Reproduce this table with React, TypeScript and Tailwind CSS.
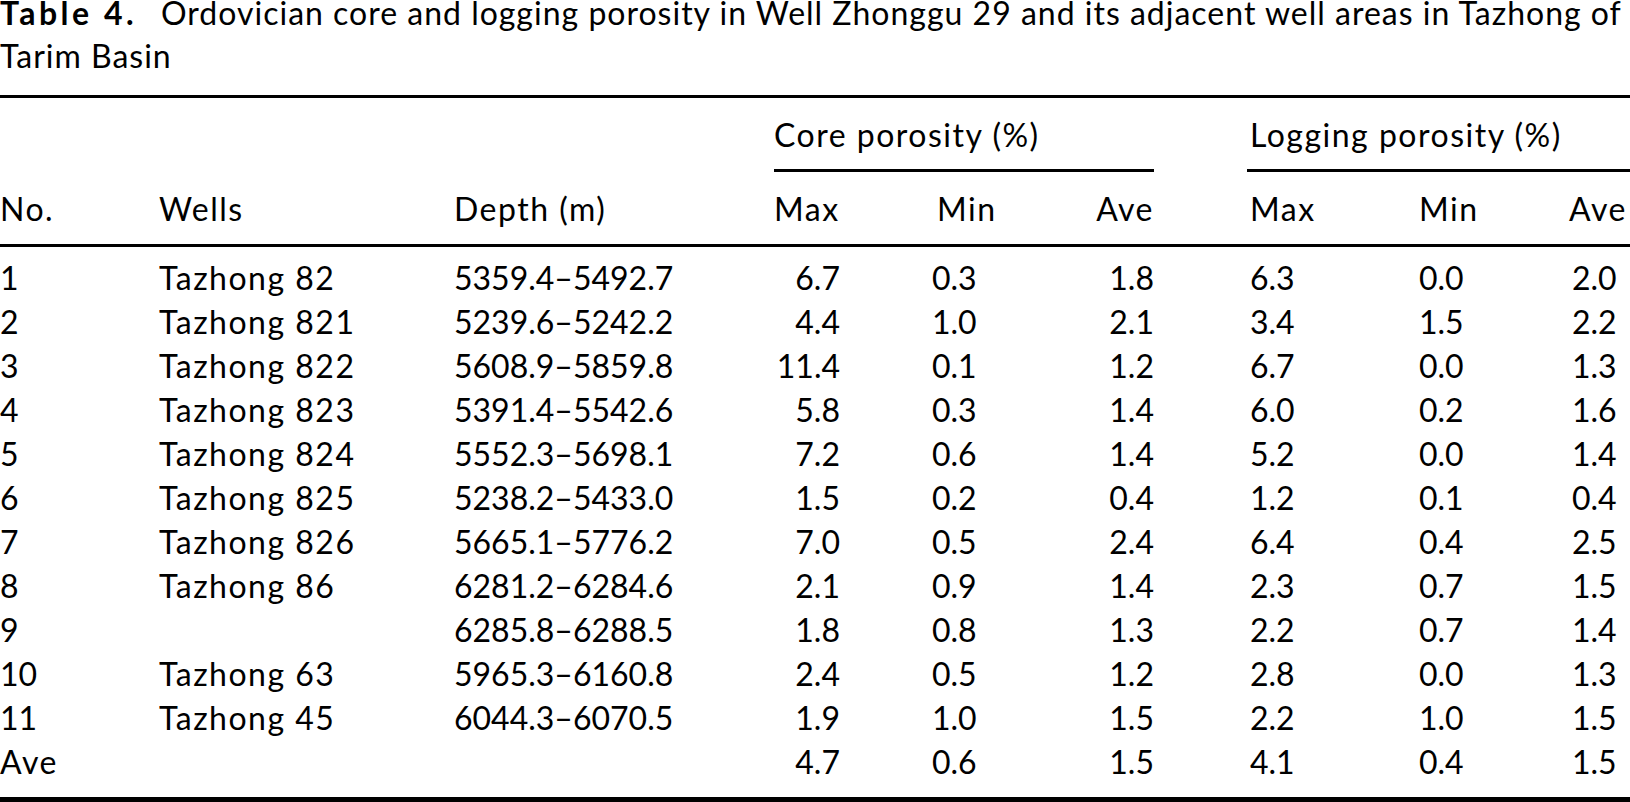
const cols =
  "grid grid-cols-[159px_295px_320px_158px_158px_160px_169px_150px_63px]";

type Row = {
  no: string;
  well: string;
  depth: string;
  core: [string, string, string];
  log: [string, string, string];
};

const rows: Row[] = [
  { no: "1", well: "Tazhong 82", depth: "5359.4–5492.7", core: ["6.7", "0.3", "1.8"], log: ["6.3", "0.0", "2.0"] },
  { no: "2", well: "Tazhong 821", depth: "5239.6–5242.2", core: ["4.4", "1.0", "2.1"], log: ["3.4", "1.5", "2.2"] },
  { no: "3", well: "Tazhong 822", depth: "5608.9–5859.8", core: ["11.4", "0.1", "1.2"], log: ["6.7", "0.0", "1.3"] },
  { no: "4", well: "Tazhong 823", depth: "5391.4–5542.6", core: ["5.8", "0.3", "1.4"], log: ["6.0", "0.2", "1.6"] },
  { no: "5", well: "Tazhong 824", depth: "5552.3–5698.1", core: ["7.2", "0.6", "1.4"], log: ["5.2", "0.0", "1.4"] },
  { no: "6", well: "Tazhong 825", depth: "5238.2–5433.0", core: ["1.5", "0.2", "0.4"], log: ["1.2", "0.1", "0.4"] },
  { no: "7", well: "Tazhong 826", depth: "5665.1–5776.2", core: ["7.0", "0.5", "2.4"], log: ["6.4", "0.4", "2.5"] },
  { no: "8", well: "Tazhong 86", depth: "6281.2–6284.6", core: ["2.1", "0.9", "1.4"], log: ["2.3", "0.7", "1.5"] },
  { no: "9", well: "", depth: "6285.8–6288.5", core: ["1.8", "0.8", "1.3"], log: ["2.2", "0.7", "1.4"] },
  { no: "10", well: "Tazhong 63", depth: "5965.3–6160.8", core: ["2.4", "0.5", "1.2"], log: ["2.8", "0.0", "1.3"] },
  { no: "11", well: "Tazhong 45", depth: "6044.3–6070.5", core: ["1.9", "1.0", "1.5"], log: ["2.2", "1.0", "1.5"] },
  { no: "Ave", well: "", depth: "", core: ["4.7", "0.6", "1.5"], log: ["4.1", "0.4", "1.5"] },
];

// word labels in the source face run a little wider than Lato
const word = "tracking-[1.5px]";

function DataRow({ row }: { row: Row }) {
  return (
    <div className={`${cols} h-[44px] leading-[44px]`}>
      <div className={row.no === "Ave" ? word : ""}>{row.no}</div>
      <div className={word}>{row.well}</div>
      <div>{row.depth}</div>
      <div>
        <div className="w-[66px] text-right">{row.core[0]}</div>
      </div>
      <div>{row.core[1]}</div>
      <div>
        <div className="w-[64px] text-right">{row.core[2]}</div>
      </div>
      <div>{row.log[0]}</div>
      <div>{row.log[1]}</div>
      <div className="pl-[3px]">{row.log[2]}</div>
    </div>
  );
}

export default function App() {
  return (
    <div className="w-[1630px] h-[802px] overflow-hidden bg-white text-black font-['Lato',sans-serif]">
      <div className="w-[1640px]">
        {/* caption */}
        <div className="-mt-[9px] text-[32px] leading-[43px] whitespace-nowrap tracking-[1px]">
          <div>
            <span className="font-bold tracking-[3.5px]">Table 4.</span>
            <span className="ml-[24px]">
              Ordovician core and logging porosity in Well Zhonggu 29 and its
              adjacent well areas in Tazhong of
            </span>
          </div>
          <div>Tarim Basin</div>
        </div>

        <div className="mt-[18px] h-[3px] bg-black" />

        <div className="text-[32px]">
          {/* group headings */}
          <div className={`${cols} mt-[15px] h-[44px] leading-[44px] ${word}`}>
            <div className="col-start-4 col-span-3 whitespace-nowrap">
              Core porosity (%)
            </div>
            <div className="col-span-3 whitespace-nowrap">
              Logging porosity (%)
            </div>
          </div>
          <div className={`${cols} mt-[12px] h-[3px]`}>
            <div className="col-start-4 col-span-3">
              <div className="h-[3px] w-[380px] bg-black" />
            </div>
            <div className="col-span-3 -ml-[3px] h-[3px] bg-black" />
          </div>

          {/* column headings */}
          <div className={`${cols} mt-[15px] h-[44px] leading-[44px] ${word}`}>
            <div>No.</div>
            <div>Wells</div>
            <div>Depth (m)</div>
            <div>Max</div>
            <div className="pl-[5px]">Min</div>
            <div>
              <div className="w-[64px] text-right">Ave</div>
            </div>
            <div>Max</div>
            <div>Min</div>
            <div>Ave</div>
          </div>

          <div className="mt-[13px] h-[3px] bg-black" />

          <div className="pt-[9px]">
            {rows.map((row) => (
              <DataRow key={row.no} row={row} />
            ))}
          </div>

          <div className="mt-[13px] h-[6px] bg-black" />
        </div>
      </div>
    </div>
  );
}
